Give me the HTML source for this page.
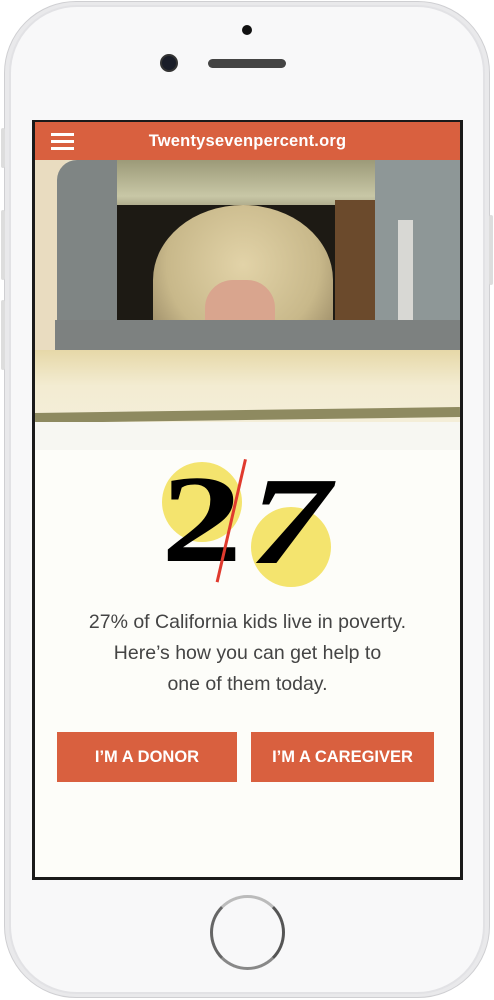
<!DOCTYPE html>
<html><head><style>
*{margin:0;padding:0;box-sizing:border-box}
body{width:494px;height:1000px;background:#fff;position:relative;overflow:hidden;font-family:"Liberation Sans",sans-serif}
.a{position:absolute}
.d{font-family:'Liberation Serif',serif;font-weight:bold;font-size:125px;line-height:125px;color:#000;transform:scaleX(1.3);transform-origin:left top}
</style></head><body>
<div class="a" style="left:4px;top:1px;width:486px;height:997px;border-radius:72px;background:#e9e9eb;border:1px solid #cfcfd2"></div>
<div class="a" style="left:9px;top:5px;width:476px;height:989px;border-radius:68px;background:#f8f8f9;border:2px solid #e2e2e5"></div>
<div class="a" style="left:1px;top:128px;width:4px;height:40px;background:#ddd;border-radius:2px"></div>
<div class="a" style="left:1px;top:210px;width:4px;height:70px;background:#ddd;border-radius:2px"></div>
<div class="a" style="left:1px;top:300px;width:4px;height:70px;background:#ddd;border-radius:2px"></div>
<div class="a" style="left:489px;top:215px;width:4px;height:70px;background:#ddd;border-radius:2px"></div>
<div class="a" style="left:242px;top:25px;width:10px;height:10px;border-radius:50%;background:#111"></div>
<div class="a" style="left:160px;top:54px;width:18px;height:18px;border-radius:50%;background:#1a1d28;border:2px solid #333"></div>
<div class="a" style="left:208px;top:59px;width:78px;height:9px;border-radius:5px;background:#444"></div>
<div class="a" style="left:210px;top:895px;width:75px;height:75px;border-radius:50%;border:3px solid #888;border-top-color:#bbb;border-right-color:#555;border-left-color:#666"></div>

<div class="a" style="left:32px;top:120px;width:431px;height:760px;background:#1a1a1a"></div>
<div class="a" style="left:35px;top:122px;width:425px;height:755px;background:#fdfdf9;overflow:hidden">
  <div class="a" style="left:0;top:0;width:425px;height:38px;background:#d9603f"></div>
  <div class="a" style="left:16px;top:11px;width:23px;height:3px;background:#fff"></div>
  <div class="a" style="left:16px;top:18px;width:23px;height:3px;background:#fff"></div>
  <div class="a" style="left:16px;top:25px;width:23px;height:3px;background:#fff"></div>
  <div class="a" style="left:0;top:10px;width:425px;text-align:center;color:#fff;font-weight:bold;font-size:16.5px;letter-spacing:0.2px">Twentysevenpercent.org</div>
  <!-- photo -->
  <div class="a" style="left:0;top:38px;width:425px;height:290px;background:#e8dfc4;overflow:hidden">
    <div class="a" style="left:80px;top:0;width:280px;height:60px;background:linear-gradient(#9c9a78,#c8c7a6 60%,#8a8466)"></div>
    <div class="a" style="left:70px;top:45px;width:290px;height:150px;background:#1d1a14"></div>
    <div class="a" style="left:300px;top:40px;width:60px;height:160px;background:#6b4a2c"></div>
    <div class="a" style="left:0;top:0;width:30px;height:200px;background:#e9dcc0"></div>
    <div class="a" style="left:22px;top:0;width:60px;height:200px;background:#7f8584;border-radius:20px 0 0 0"></div>
    <div class="a" style="left:340px;top:0;width:85px;height:180px;background:#8e9797"></div>
    <div class="a" style="left:363px;top:60px;width:15px;height:110px;background:#d8d8d4"></div>
    <div class="a" style="left:118px;top:45px;width:180px;height:150px;border-radius:50% 50% 20% 20%;background:radial-gradient(ellipse at 50% 40%,#e2d3a8,#c8b88a 60%,#8a7a5a)"></div>
    <div class="a" style="left:170px;top:120px;width:70px;height:70px;border-radius:40%;background:#d9a58e"></div>
    <div class="a" style="left:20px;top:160px;width:405px;height:40px;background:#7d8180;border-radius:0 0 10px 10px"></div>
    <div class="a" style="left:0;top:190px;width:425px;height:90px;background:linear-gradient(#e6d8a8,#f3ecd2 40%,#f4efdc)"></div>
    <div class="a" style="left:0;top:250px;width:425px;height:10px;background:#8e8a60;transform:rotate(-0.8deg)"></div>
    <div class="a" style="left:0;top:262px;width:425px;height:30px;background:#f7f7f2"></div>
  </div>
  <!-- 27 -->
  <div class="a" style="left:127px;top:340px;width:80px;height:80px;border-radius:50%;background:#f4e46e"></div>
  <div class="a" style="left:216px;top:385px;width:80px;height:80px;border-radius:50%;background:#f4e46e"></div>
  <div class="a d" style="left:126px;top:336px">2</div>
  <div class="a d" style="left:214px;top:338px;font-style:italic">7</div>
  <div class="a" style="left:209px;top:337px;width:3px;height:126px;background:#e03a2e;transform:rotate(13deg);transform-origin:top left"></div>
  <div class="a" style="left:0;top:485px;width:425px;text-align:center;color:#444;font-size:19.5px;line-height:31px">27% of California kids live in poverty.<br>Here’s how you can get help to<br>one of them today.</div>
  <div class="a" style="left:22px;top:610px;width:180px;height:50px;background:#d9603f;color:#fff;font-weight:bold;font-size:16.5px;line-height:50px;text-align:center">I’M A DONOR</div>
  <div class="a" style="left:216px;top:610px;width:183px;height:50px;background:#d9603f;color:#fff;font-weight:bold;font-size:16.5px;line-height:50px;text-align:center">I’M A CAREGIVER</div>
</div>
</body></html>
